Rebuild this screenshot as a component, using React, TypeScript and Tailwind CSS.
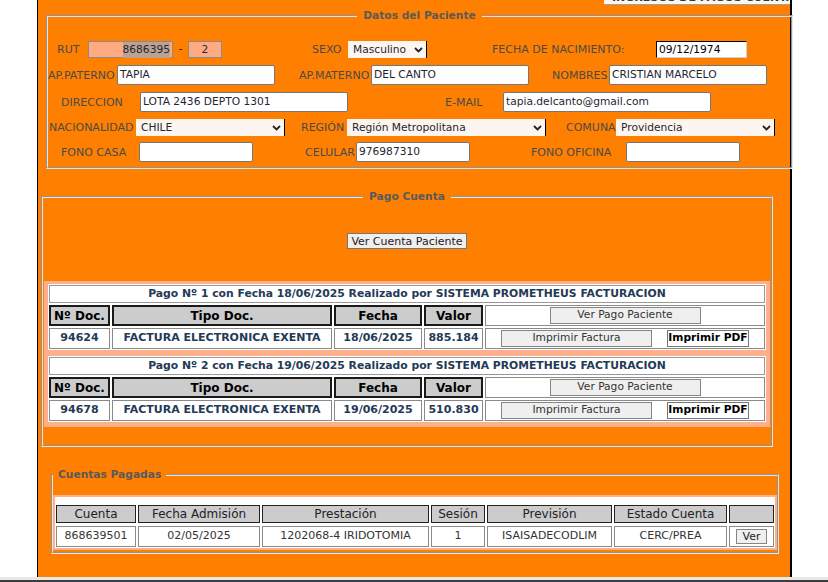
import React from "react";

const Label = ({ className, children }: { className: string; children: React.ReactNode }) => (
  <span className={`shrink-0 whitespace-nowrap text-[11px] leading-[13px] text-[#4a4a4a] ${className}`}>{children}</span>
);

const TextBox = ({ className, value }: { className: string; value?: string }) => (
  <div
    className={`shrink-0 h-full flex items-center bg-white border border-[#767676] rounded-[2px] px-[2px] text-[10.67px] text-[#1f2533] whitespace-nowrap overflow-hidden ${className}`}
  >
    {value}
  </div>
);

const Chevron = () => (
  <svg width="9" height="6" viewBox="0 0 9 6" className="shrink-0">
    <polyline points="1,1 4.5,4.5 8,1" fill="none" stroke="#222" strokeWidth="1.8" />
  </svg>
);

const SelectBox = ({ className, value }: { className: string; value: string }) => (
  <div
    className={`shrink-0 h-full flex items-center justify-between bg-[#fdf6f0] border-r border-black pl-[5px] pr-[3px] text-[10.67px] text-[#1f2533] whitespace-nowrap ${className}`}
  >
    <span>{value}</span>
    <Chevron />
  </div>
);

const HeadCell = ({ className, children }: { className: string; children?: React.ReactNode }) => (
  <div
    className={`shrink-0 h-full flex items-center justify-center bg-[#cccccc] border-2 border-[#1a1a1a] text-[12px] font-bold text-black whitespace-nowrap ${className}`}
  >
    {children}
  </div>
);

const DataCell = ({ className, children }: { className: string; children?: React.ReactNode }) => (
  <div
    className={`shrink-0 h-full flex items-center justify-center bg-white border border-[#8a8a8a] text-[11px] font-bold text-[#233a57] whitespace-nowrap ${className}`}
  >
    {children}
  </div>
);

const PagoTable = ({ n, fecha, doc, valor }: { n: number; fecha: string; doc: string; valor: string }) => (
  <div className="bg-white p-[1px] flex flex-col gap-[2px]">
    <div className="h-[18px] border border-[#9a9a9a] flex items-center justify-center text-[10.8px] font-bold text-[#233a57] whitespace-nowrap">
      Pago Nº {n} con Fecha {fecha} Realizado por SISTEMA PROMETHEUS FACTURACION
    </div>
    <div className="h-[21px] flex gap-[2px]">
      <HeadCell className="w-[61px]">Nº Doc.</HeadCell>
      <HeadCell className="w-[220px]">Tipo Doc.</HeadCell>
      <HeadCell className="w-[88px]">Fecha</HeadCell>
      <HeadCell className="w-[59px]">Valor</HeadCell>
      <div className="shrink-0 w-[280px] h-full flex items-center justify-center border border-[#8a8a8a] bg-white">
        <button className="w-[151px] h-[17px] bg-[#efefef] border border-[#858585] text-[10.67px] text-[#333] leading-none whitespace-nowrap">
          Ver Pago Paciente
        </button>
      </div>
    </div>
    <div className="h-[21px] flex gap-[2px]">
      <DataCell className="w-[61px]">{doc}</DataCell>
      <DataCell className="w-[220px]">FACTURA ELECTRONICA EXENTA</DataCell>
      <DataCell className="w-[88px]">{fecha}</DataCell>
      <DataCell className="w-[59px]">{valor}</DataCell>
      <div className="shrink-0 w-[280px] h-full flex items-center justify-center gap-[15px] border border-[#8a8a8a] bg-white">
        <button className="w-[151px] h-[17px] bg-[#efefef] border border-[#858585] text-[10.67px] text-[#333] leading-none whitespace-nowrap">
          Imprimir Factura
        </button>
        <button className="w-[82px] h-[17px] px-0 flex items-center justify-center bg-white border border-[#777] text-[10.67px] font-bold text-black leading-none whitespace-nowrap overflow-visible">
          Imprimir PDF
        </button>
      </div>
    </div>
  </div>
);

const BHead = ({ className, children }: { className: string; children?: React.ReactNode }) => (
  <div
    className={`shrink-0 h-full flex items-center justify-center bg-[#cccccc] border border-[#222] text-[12px] text-[#222] whitespace-nowrap ${className}`}
  >
    {children}
  </div>
);

const BCell = ({ className, children }: { className: string; children?: React.ReactNode }) => (
  <div
    className={`shrink-0 h-full flex items-center justify-center bg-white border border-[#8a8a8a] text-[11px] text-[#333] whitespace-nowrap ${className}`}
  >
    {children}
  </div>
);

export default function App() {
  return (
    <div className="w-[828px] h-[582px] bg-white overflow-hidden font-['DejaVu_Sans',sans-serif]">
      <div className="ml-[37px] w-[755px] h-[577px] border-l border-r-2 border-black bg-[#ff8000] flex flex-col">
        {/* top right box */}
        <div className="ml-auto w-[186px] h-[5px] overflow-hidden bg-[#fdf6ee] border-b border-[#a0a0a0] shrink-0">
          <div className="-mt-[9px] pl-[8px] text-[11px] leading-[13px] font-bold text-[#233a57] whitespace-nowrap">
            INGRESOS DE PAGOS CUENTA
          </div>
        </div>

        {/* Datos del Paciente */}
        <fieldset className="mt-[5px] ml-[8px] w-[747px] shrink-0 border-2 [border-style:groove] border-[#e6e6e6] px-0 pt-[19px] pb-[5px] m-0">
          <legend className="mx-auto px-[6px] text-[10.67px] leading-[12px] font-bold text-[#5a5a5a]">Datos del Paciente</legend>

          <div className="h-[17px] flex items-center">
            <Label className="ml-[9px] w-[31px]">RUT</Label>
            <div className="shrink-0 w-[85px] h-[17px] flex items-center justify-end bg-[#ffab82] border border-[#8a8a8a] pr-[2px] text-[10.67px] text-[#1f2533]">
              <span className="bg-[#bca292]">8686395</span>
            </div>
            <span className="shrink-0 w-[15px] text-center text-[11px] text-[#222]">-</span>
            <div className="shrink-0 w-[34px] h-[17px] flex items-center justify-center bg-[#ffab82] border border-[#8a8a8a] text-[10.67px] text-[#1f2533]">
              2
            </div>
            <Label className="ml-[90px] w-[36px]">SEXO</Label>
            <SelectBox className="w-[79px]" value="Masculino" />
            <Label className="ml-[65px] w-[164px]">FECHA DE NACIMIENTO:</Label>
            <div className="shrink-0 w-[91px] h-[17px] flex items-center bg-white border border-t-black border-l-black border-r-[#d0d0d0] border-b-[#d0d0d0] px-[2px] text-[10.67px] text-black">
              09/12/1974
            </div>
          </div>

          <div className="mt-[7px] h-[20px] flex items-center">
            <Label className="ml-0 w-[69px]">AP.PATERNO</Label>
            <TextBox className="w-[158px]" value="TAPIA" />
            <Label className="ml-[24px] w-[72px]">AP.MATERNO</Label>
            <TextBox className="w-[158px]" value="DEL CANTO" />
            <Label className="ml-[23px] w-[57px]">NOMBRES</Label>
            <TextBox className="w-[158px]" value="CRISTIAN MARCELO" />
          </div>

          <div className="mt-[7px] h-[20px] flex items-center">
            <Label className="ml-[13px] w-[79px]">DIRECCION</Label>
            <TextBox className="w-[208px]" value="LOTA 2436 DEPTO 1301" />
            <Label className="ml-[97px] w-[58px]">E-MAIL</Label>
            <TextBox className="w-[208px]" value="tapia.delcanto@gmail.com" />
          </div>

          <div className="mt-[7px] h-[17px] flex items-center">
            <Label className="ml-[1px] w-[87px]">NACIONALIDAD</Label>
            <SelectBox className="w-[149px]" value="CHILE" />
            <Label className="ml-[16px] w-[46px]">REGIÓN</Label>
            <SelectBox className="w-[199px]" value="Región Metropolitana" />
            <Label className="ml-[20px] w-[50px]">COMUNA</Label>
            <SelectBox className="w-[159px]" value="Providencia" />
          </div>

          <div className="mt-[6px] h-[20px] flex items-center">
            <Label className="ml-[13px] w-[78px]">FONO CASA</Label>
            <TextBox className="w-[114px]" />
            <Label className="ml-[52px] w-[51px]">CELULAR</Label>
            <TextBox className="w-[114px]" value="976987310" />
            <Label className="ml-[61px] w-[95px]">FONO OFICINA</Label>
            <TextBox className="w-[114px]" />
          </div>
        </fieldset>

        {/* Pago Cuenta */}
        <fieldset className="mt-[22px] ml-[3px] w-[732px] shrink-0 border-2 [border-style:groove] border-[#e6e6e6] px-0 pt-[30px] pb-[18px] m-0">
          <legend className="mx-auto px-[6px] text-[10.67px] leading-[12px] font-bold text-[#5a5a5a]">Pago Cuenta</legend>
          <div className="flex justify-center">
            <button className="w-[120px] h-[16px] bg-[#efefef] border border-[#767676] text-[11px] text-[#222] leading-none whitespace-nowrap">
              Ver Cuenta Paciente
            </button>
          </div>
          <div className="mt-[32px] ml-[1px] w-[726px] bg-[#ffb08a] pt-[3px] pb-[5px] px-[4px] flex flex-col gap-[6px]">
            <PagoTable n={1} fecha="18/06/2025" doc="94624" valor="885.184" />
            <PagoTable n={2} fecha="19/06/2025" doc="94678" valor="510.830" />
          </div>
        </fieldset>

        {/* Cuentas Pagadas */}
        <fieldset className="mt-[22px] ml-[13px] w-[728px] shrink-0 border-2 [border-style:groove] border-[#e6e6e6] px-0 pt-[14px] pb-[2px] m-0">
          <legend className="ml-0 px-[5px] text-[10.67px] leading-[12px] font-bold text-[#5a5a5a]">Cuentas Pagadas</legend>
          <div className="w-[724px] border-2 border-[#ffb08a] bg-white pt-[8px] pb-[1px] px-[1px] flex flex-col gap-[3px]">
            <div className="h-[18px] flex gap-[2px]">
              <BHead className="w-[80px]">Cuenta</BHead>
              <BHead className="w-[122px]">Fecha Admisión</BHead>
              <BHead className="w-[167px]">Prestación</BHead>
              <BHead className="w-[54px]">Sesión</BHead>
              <BHead className="w-[125px]">Previsión</BHead>
              <BHead className="w-[113px]">Estado Cuenta</BHead>
              <BHead className="w-[45px]" />
            </div>
            <div className="h-[21px] flex gap-[2px]">
              <BCell className="w-[80px]">868639501</BCell>
              <BCell className="w-[122px]">02/05/2025</BCell>
              <BCell className="w-[167px]">1202068-4 IRIDOTOMIA</BCell>
              <BCell className="w-[54px]">1</BCell>
              <BCell className="w-[125px]">ISAISADECODLIM</BCell>
              <BCell className="w-[113px]">CERC/PREA</BCell>
              <BCell className="w-[45px]">
                <button className="w-[31px] h-[15px] bg-[#efefef] border border-[#858585] text-[11px] text-[#222] leading-none">
                  Ver
                </button>
              </BCell>
            </div>
          </div>
        </fieldset>
      </div>
      <div className="w-full h-[5px] bg-[#e8e8e8] border-b-2 border-[#3c3c3c]" />
    </div>
  );
}
